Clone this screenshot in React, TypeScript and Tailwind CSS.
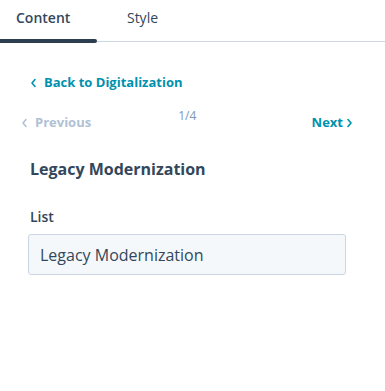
import React from "react";

const Chevron = ({ dir, className }: { dir: "left" | "right"; className?: string }) => (
  <svg width="7" height="10" viewBox="0 0 7 10" className={className} fill="none" stroke="currentColor" strokeWidth="1.6" strokeLinecap="round" strokeLinejoin="round">
    {dir === "left" ? <path d="M5 1.5 L2 5 L5 8.5" /> : <path d="M2 1.5 L5 5 L2 8.5" />}
  </svg>
);

export default function App() {
  return (
    <div className="w-[385px] h-[391px] bg-white" style={{ fontFamily: '"Open Sans", "Noto Sans", sans-serif' }}>
      <div className="flex h-[42px] border-b border-[#cbd6e2] relative">
        <div className="relative w-[97px] flex items-center pl-[16px] text-[14px] font-semibold text-[#33475b] pb-[6px]">
          Content
          <div className="absolute left-0 right-0 bottom-[-2px] h-[4px] bg-[#2d3e50] rounded-r-[2px]" />
        </div>
        <div className="w-[91px] flex items-center justify-center text-[14px] text-[#33475b] pb-[6px]">Style</div>
      </div>
      <div className="pl-[30px] pr-[32px]">
        <div className="mt-[33px] flex items-center gap-[7px] text-[13px] font-bold text-[#0091ae] h-[16px]">
          <Chevron dir="left" />
          <span>Back to Digitalization</span>
        </div>
        <div className="mt-[16px] flex items-start -ml-[9px] h-[24px]">
          <div className="flex items-center gap-[7px] text-[13px] font-bold text-[#b0c1d4] mt-[6px]">
            <Chevron dir="left" />
            <span>Previous</span>
          </div>
          <div className="text-[12px] text-[#7c98b6] ml-[87px]">1/4</div>
          <div className="ml-auto flex items-center gap-[3px] text-[13px] font-bold text-[#0091ae] mt-[6px]">
            <span>Next</span>
            <Chevron dir="right" />
          </div>
        </div>
        <div className="mt-[26px] text-[16px] font-bold text-[#33475b]">Legacy Modernization</div>
        <div className="mt-[25px] text-[14px] font-semibold text-[#33475b]">List</div>
        <div className="mt-[7px] -ml-[2px] w-[318px] h-[41px] border border-[#cbd6e2] bg-[#f5f8fa] rounded-[3px] flex items-center px-[11px] text-[16px] text-[#33475b]">
          Legacy Modernization
        </div>
      </div>
    </div>
  );
}
